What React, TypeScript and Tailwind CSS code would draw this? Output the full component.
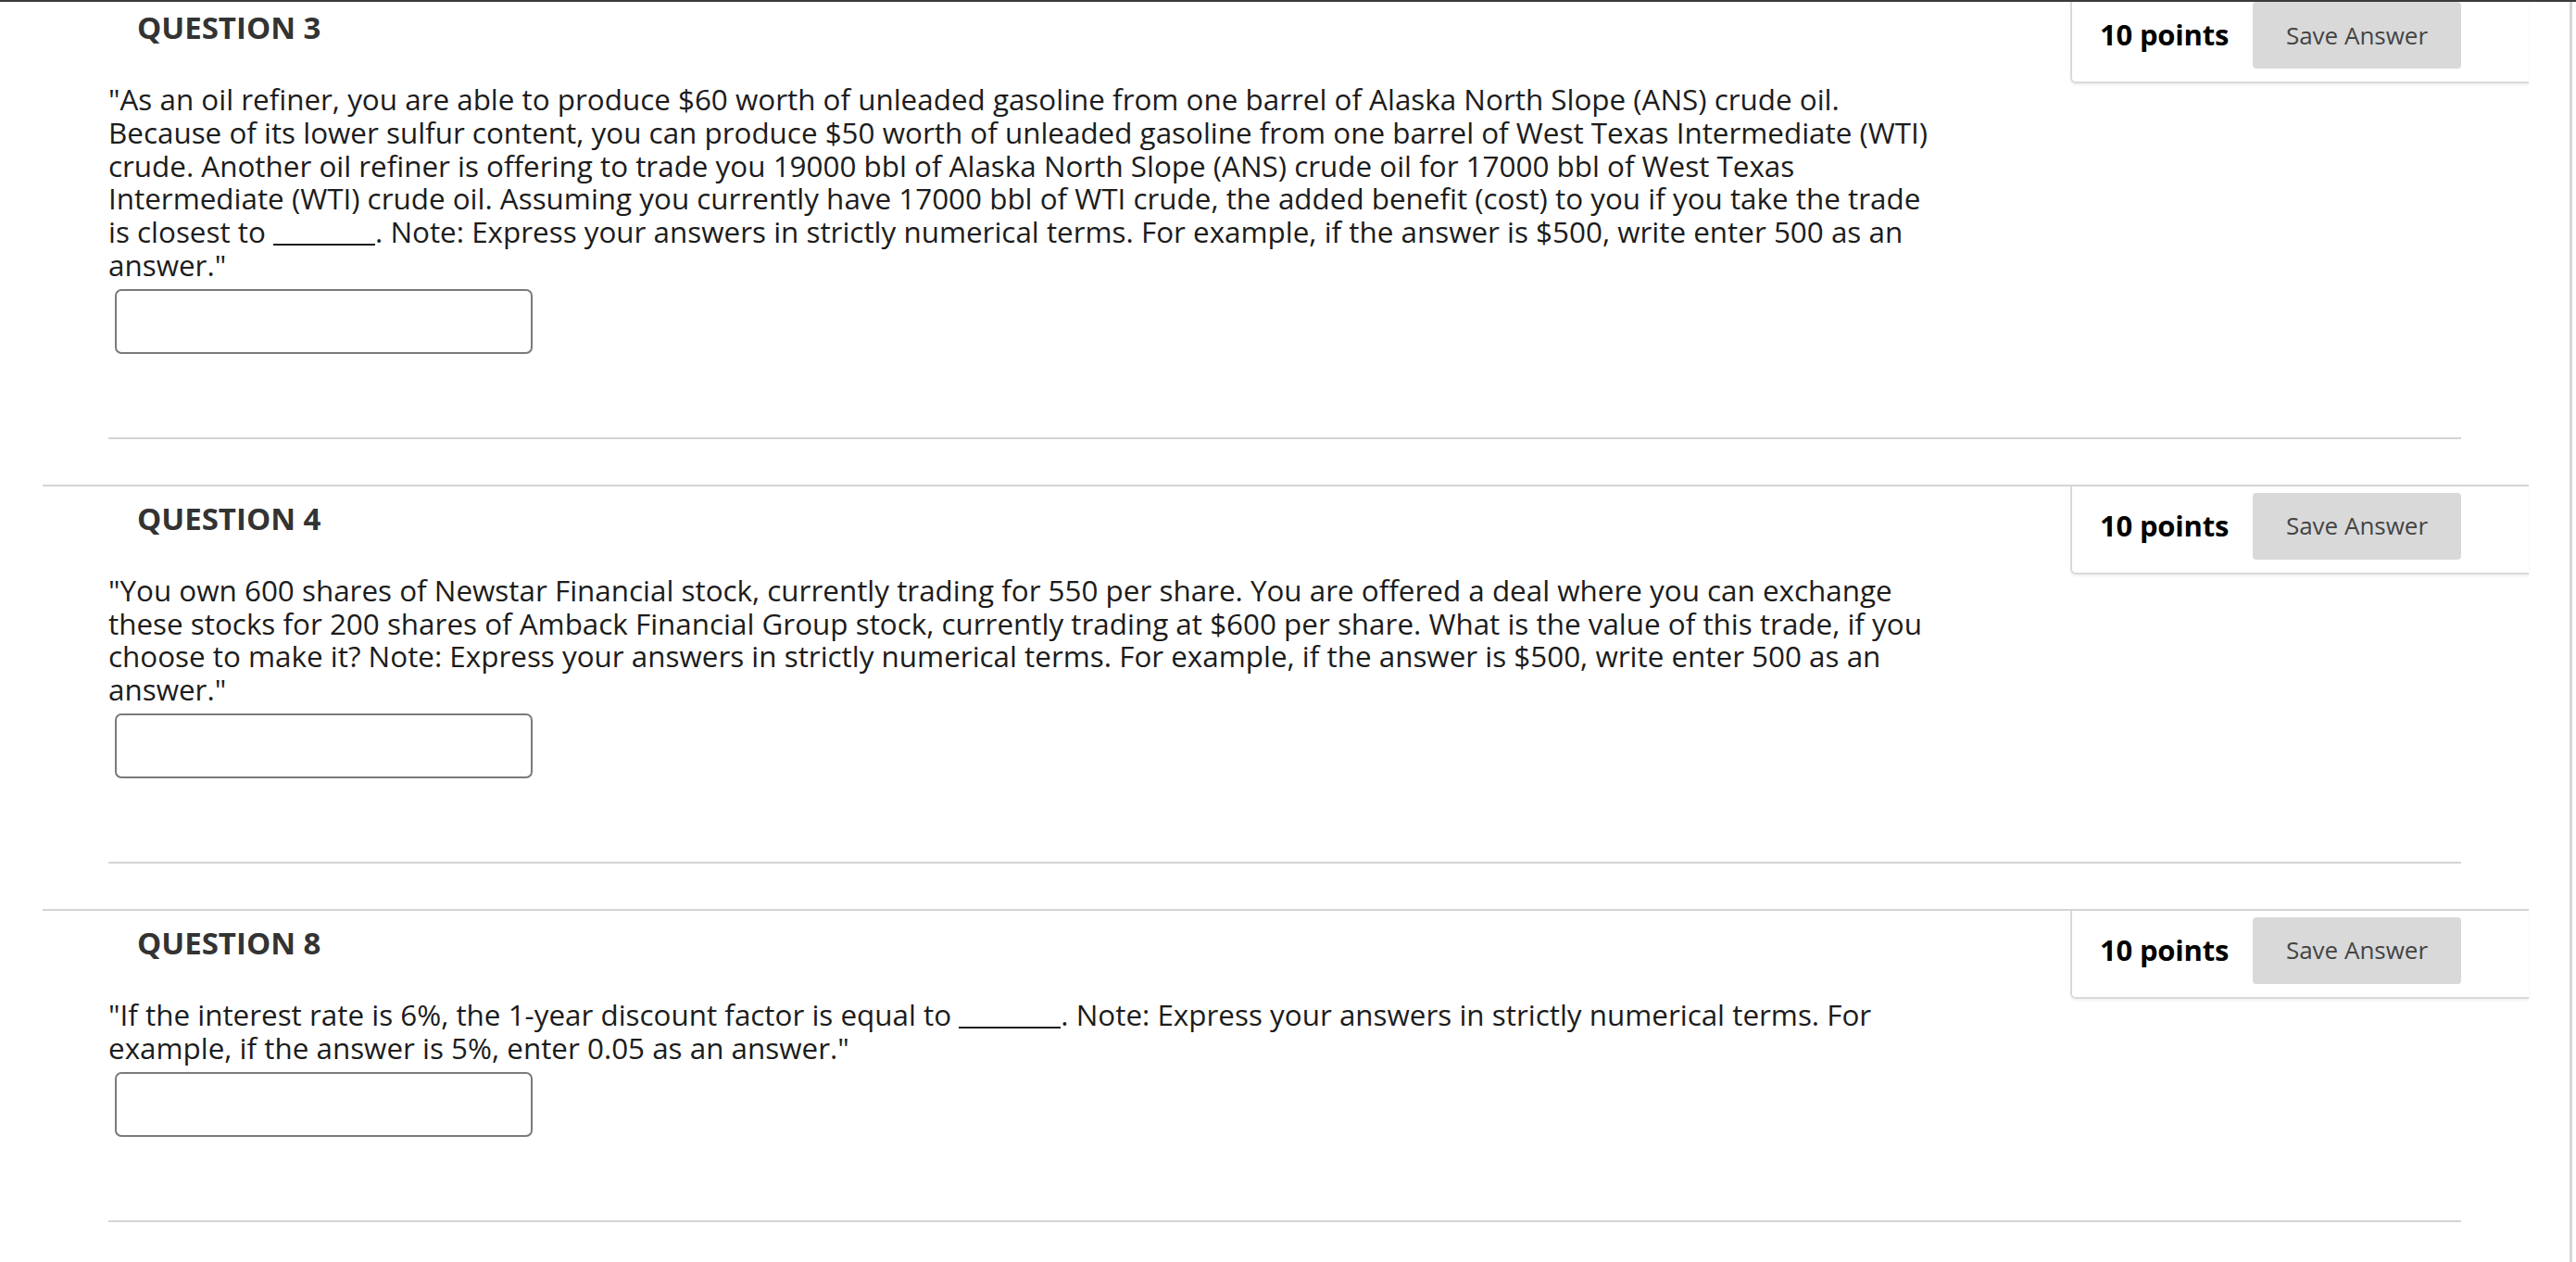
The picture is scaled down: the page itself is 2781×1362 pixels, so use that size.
import React from "react";

type Question = {
  num: number;
  lines: React.ReactNode[];
};

// the answer blank drawn inside the sentence
const Blank = () => <span className="inline-block w-[110px] border-b-2 border-[#1c1c1c] translate-y-[3px]" />;

const questions: Question[] = [
  {
    num: 3,
    lines: [
      '"As an oil refiner, you are able to produce $60 worth of unleaded gasoline from one barrel of Alaska North Slope (ANS) crude oil.',
      "Because of its lower sulfur content, you can produce $50 worth of unleaded gasoline from one barrel of West Texas Intermediate (WTI)",
      "crude. Another oil refiner is offering to trade you 19000 bbl of Alaska North Slope (ANS) crude oil for 17000 bbl of West Texas",
      "Intermediate (WTI) crude oil. Assuming you currently have 17000 bbl of WTI crude, the added benefit (cost) to you if you take the trade",
      <>
        is closest to <Blank />. Note: Express your answers in strictly numerical terms. For example, if the answer is $500, write enter 500 as an
      </>,
      'answer."',
    ],
  },
  {
    num: 4,
    lines: [
      '"You own 600 shares of Newstar Financial stock, currently trading for 550 per share. You are offered a deal where you can exchange',
      "these stocks for 200 shares of Amback Financial Group stock, currently trading at $600 per share. What is the value of this trade, if you",
      "choose to make it? Note: Express your answers in strictly numerical terms. For example, if the answer is $500, write enter 500 as an",
      'answer."',
    ],
  },
  {
    num: 8,
    lines: [
      <>
        "If the interest rate is 6%, the 1-year discount factor is equal to <Blank />. Note: Express your answers in strictly numerical terms. For
      </>,
      'example, if the answer is 5%, enter 0.05 as an answer."',
    ],
  },
];

function QuestionBlock({ q }: { q: Question }) {
  return (
    <section className="w-[2684px] ml-[46px] border-t-2 border-[#d4d4d4] mb-[49px]">
      {/* header row: title + points card */}
      <div className="flex items-start justify-between">
        <h2 className="pl-[102px] pt-[15px] text-[33px] leading-[40px] font-bold text-[#333]">
          QUESTION {q.num}
        </h2>
        <div className="h-[95px] w-[495px] border-l-2 border-b-2 border-[#d9d9d9] rounded-bl-[6px] shadow-[0_2px_3px_rgba(0,0,0,0.06)] flex items-start pl-[30px] pr-[73px] pt-[7px]">
          <span className="mt-[15px] text-[31px] leading-[40px] font-bold text-black tracking-[-0.2px]">10 points</span>
          <button className="ml-auto h-[72px] w-[225px] bg-[#d9d9d9] rounded-[4px] text-[26px] text-[#444]">
            Save Answer
          </button>
        </div>
      </div>

      {/* body */}
      <div className="pl-[71px]">
        <p className="-mt-[1px] text-[31.4px] leading-[35.8px] text-[#1c1c1c] whitespace-nowrap">
          {q.lines.map((l, i) => (
            <span key={i} className="block">
              {l}
            </span>
          ))}
        </p>
        <input
          type="text"
          className="mt-[8px] ml-[7px] block h-[70px] w-[451px] border-2 border-[#7a7a7a] rounded-[7px] bg-white"
        />
        <div className="mt-[90px] w-[2540px] border-t-2 border-[#d4d4d4]" />
      </div>
    </section>
  );
}

export default function App() {
  return (
    <div
      className="h-[1362px] bg-white border-t-2 border-[#3a3a3a] overflow-hidden"
      style={{ fontFamily: '"Open Sans", "Noto Sans", sans-serif' }}
    >
      <div className="flex h-full">
        <div className="w-[2774px] overflow-hidden">
          <div className="-mt-[9px]">
            {questions.map((q) => (
              <QuestionBlock key={q.num} q={q} />
            ))}
          </div>
        </div>
        <div className="w-[3px] bg-[#d6d6d6]" />
      </div>
    </div>
  );
}
